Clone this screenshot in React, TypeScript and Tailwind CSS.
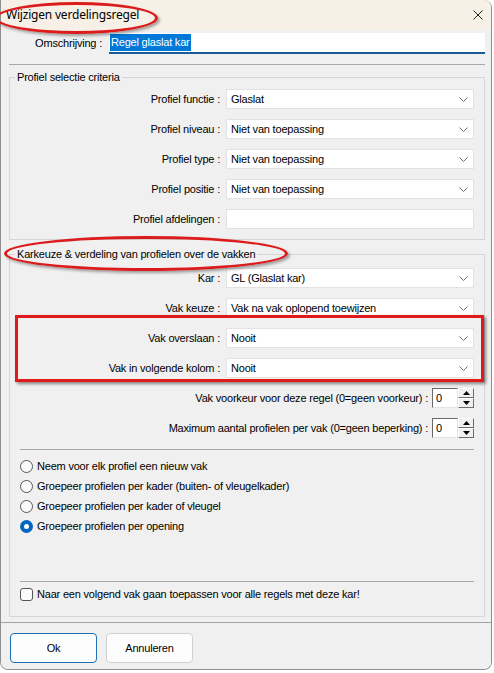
import React from "react";

const Chevron = () => (
  <svg width="9" height="5" viewBox="0 0 9 5" className="text-[#707070]">
    <path d="M0.5 0.5 L4.5 4.5 L8.5 0.5" fill="none" stroke="currentColor" strokeWidth="1" />
  </svg>
);

const Select: React.FC<{ value: string }> = ({ value }) => (
  <div className="flex h-[20px] items-center justify-between border border-[#e2e2e2] bg-white pl-[4px] pr-[5px]">
    <span>{value}</span>
    <Chevron />
  </div>
);

const Row: React.FC<{ label: string; children: React.ReactNode }> = ({ label, children }) => (
  <div className="flex items-center">
    <div className="w-[210px] text-right">{label}</div>
    <div className="ml-[6px] flex-1">{children}</div>
  </div>
);

const Triangle: React.FC<{ up?: boolean }> = ({ up }) => (
  <svg width="7" height="4" viewBox="0 0 7 4">
    <path d={up ? "M0 4 L3.5 0 L7 4 Z" : "M0 0 L3.5 4 L7 0 Z"} fill="#000" />
  </svg>
);

const SpinRow: React.FC<{ label: string }> = ({ label }) => (
  <div className="flex h-[20px] items-center justify-end">
    <span>{label}</span>
    <div className="ml-[4px] flex h-[20px] w-[26px] items-center border-t border-l border-t-[#696969] border-l-[#696969] border-r border-b border-r-[#e3e3e3] border-b-[#e3e3e3] bg-white pl-[3px]">
      0
    </div>
    <div className="flex h-[20px] w-[16px] flex-col">
      <div className="flex h-[10px] items-center justify-center border border-t-white border-l-white border-r-[#6d6d6d] border-b-[#6d6d6d] bg-[#f0f0f0]">
        <Triangle up />
      </div>
      <div className="flex h-[10px] items-center justify-center border border-t-white border-l-white border-r-[#6d6d6d] border-b-[#6d6d6d] bg-[#f0f0f0]">
        <Triangle />
      </div>
    </div>
  </div>
);

const Radio: React.FC<{ label: string; checked?: boolean }> = ({ label, checked }) => (
  <div className="flex h-[20px] items-center pl-[10px]">
    {checked ? (
      <span className="flex h-[13px] w-[13px] items-center justify-center rounded-full bg-[#0067c0]">
        <span className="h-[5px] w-[5px] rounded-full bg-white" />
      </span>
    ) : (
      <span className="h-[13px] w-[13px] rounded-full border border-[#555] bg-[#fbfbfb]" />
    )}
    <span className="ml-[4px]">{label}</span>
  </div>
);

export default function App() {
  return (
    <div className="relative h-[673px] w-[494px] overflow-hidden bg-white font-['Liberation_Sans',Arial,sans-serif] text-[11px] tracking-[-0.2px] text-black">
      <div className="w-[492px] overflow-hidden rounded-[8px] rounded-tl-none border-x border-b border-[#8f8f8f] bg-[#f0f0f0]">
        {/* titel */}
        <div className="flex h-[30px] items-center justify-between bg-[#f7f0e7] pl-[5px] pr-[8px]">
          <span className="font-['Noto_Sans',sans-serif] text-[12px] tracking-[-0.2px]">Wijzigen verdelingsregel</span>
          <svg width="10" height="10" viewBox="0 0 10 10">
            <path d="M0.5 0.5 L9.5 9.5 M9.5 0.5 L0.5 9.5" stroke="#222" strokeWidth="1" />
          </svg>
        </div>

        <div className="pl-[8px] pr-[6px] pt-[3px] pb-[5px]">
          {/* omschrijving */}
          <div className="flex items-center">
            <div className="w-[93px] text-right">Omschrijving :</div>
            <div className="ml-[7px] flex h-[21px] flex-1 items-center border-b-2 border-[#1a5c9a] bg-white pl-[1px]">
              <span className="bg-[#0078d7] px-[1px] text-white">Regel glaslat kar</span>
            </div>
          </div>

          <div className="mt-[10px] h-px bg-[#a8a8a8]" />

          {/* profiel selectie */}
          <fieldset className="mt-[5px] border border-[#d6d6d6] pr-[10px] pt-[5px] pb-[10px]">
            <legend className="ml-[5px] px-[2px] leading-[14px]">Profiel selectie criteria</legend>
            <div className="flex flex-col gap-[10px]">
              <Row label="Profiel functie :"><Select value="Glaslat" /></Row>
              <Row label="Profiel niveau :"><Select value="Niet van toepassing" /></Row>
              <Row label="Profiel type :"><Select value="Niet van toepassing" /></Row>
              <Row label="Profiel positie :"><Select value="Niet van toepassing" /></Row>
              <Row label="Profiel afdelingen :">
                <div className="h-[20px] border border-[#e2e2e2] bg-white" />
              </Row>
            </div>
          </fieldset>

          {/* karkeuze */}
          <fieldset className="mt-[7px] border border-[#d6d6d6] pr-[10px] pt-[7px] pb-[12px]">
            <legend className="ml-[5px] px-[2px] leading-[14px]">Karkeuze &amp; verdeling van profielen over de vakken</legend>
            <div className="flex flex-col gap-[10px]">
              <Row label="Kar :"><Select value="GL (Glaslat kar)" /></Row>
              <Row label="Vak keuze :"><Select value="Vak na vak oplopend toewijzen" /></Row>
              <Row label="Vak overslaan :"><Select value="Nooit" /></Row>
              <Row label="Vak in volgende kolom :"><Select value="Nooit" /></Row>
              <SpinRow label="Vak voorkeur voor deze regel (0=geen voorkeur) :" />
              <SpinRow label="Maximum aantal profielen per vak (0=geen beperking) :" />
            </div>

            <div className="ml-[10px] mt-[11px] h-px bg-[#a8a8a8]" />

            <div className="mt-[6px]">
              <Radio label="Neem voor elk profiel een nieuw vak" />
              <Radio label="Groepeer profielen per kader (buiten- of vleugelkader)" />
              <Radio label="Groepeer profielen per kader of vleugel" />
              <Radio label="Groepeer profielen per opening" checked />
            </div>

            <div className="ml-[10px] mt-[45px] h-px bg-[#a8a8a8]" />

            <div className="mt-[2px] flex h-[20px] items-center pl-[10px]">
              <span className="h-[13px] w-[13px] rounded-[3px] border border-[#555] bg-[#fbfbfb]" />
              <span className="ml-[4px]">Naar een volgend vak gaan toepassen voor alle regels met deze kar!</span>
            </div>
          </fieldset>
        </div>

        {/* knoppen */}
        <div className="flex gap-[9px] border-t border-[#a3a3a3] bg-[#f0f0f0] pl-[9px] pt-[10px] pb-[6px]">
          <button className="h-[30px] w-[87px] rounded-[4px] border border-[#1f6fb5] bg-[#fdfdfd]">Ok</button>
          <button className="h-[30px] w-[87px] rounded-[4px] border border-[#d0d0d0] bg-[#fdfdfd]">Annuleren</button>
        </div>
      </div>

      {/* rode markeringen */}
      <div className="pointer-events-none absolute left-[-5px] top-[2px] h-[32px] w-[163px] rounded-[50%] border-[3px] border-[#dc1c1c] shadow-[2px_2px_3px_rgba(0,0,0,0.35)]" />
      <div className="pointer-events-none absolute left-[4px] top-[236px] h-[35px] w-[284px] rounded-[50%] border-[3px] border-[#dc1c1c] shadow-[2px_2px_3px_rgba(0,0,0,0.35)]" />
      <div className="pointer-events-none absolute left-[15px] top-[315px] h-[67px] w-[469px] border-[3px] border-[#e01a1a] shadow-[2px_2px_3px_rgba(0,0,0,0.45)]" />
    </div>
  );
}
